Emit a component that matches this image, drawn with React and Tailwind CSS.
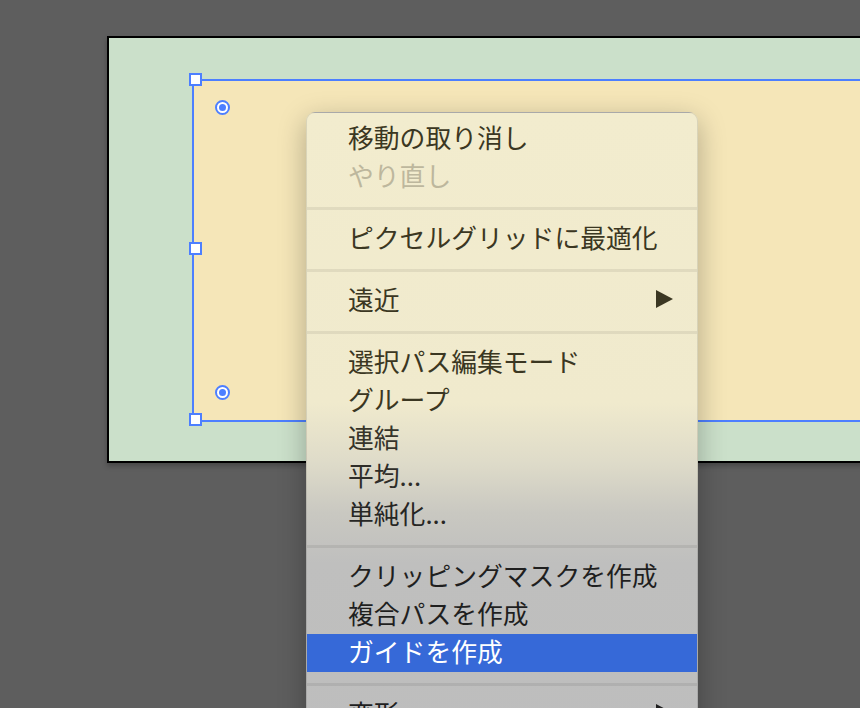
import React from 'react'

const items = [
  { label: '移動の取り消し', tone: 'text-[#3b3722]' },
  { label: 'やり直し', tone: 'text-[#bdb79d]' },
  { sep: true },
  { label: 'ピクセルグリッドに最適化', tone: 'text-[#3b3722]' },
  { sep: true },
  { label: '遠近', tone: 'text-[#3b3722]', sub: true },
  { sep: true },
  { label: '選択パス編集モード', tone: 'text-[#3b3722]' },
  { label: 'グループ', tone: 'text-[#3b3722]' },
  { label: '連結', tone: 'text-[#36342a]' },
  { label: '平均...', tone: 'text-[#2e2d28]' },
  { label: '単純化...', tone: 'text-[#262624]' },
  { sep: true },
  { label: 'クリッピングマスクを作成', tone: 'text-[#1f1f1f]' },
  { label: '複合パスを作成', tone: 'text-[#1f1f1f]' },
  { label: 'ガイドを作成', tone: 'text-white', active: true },
  { sep: true },
  { label: '変形', tone: 'text-[#1f1f1f]', sub: true },
  { label: '重ね順', tone: 'text-[#1f1f1f]', sub: true },
]

function Handle({ className }) {
  return <div className={`absolute w-[13px] h-[13px] bg-white border-2 border-[#4d7fff] ${className}`} />
}

function Pivot({ className }) {
  return (
    <div className={`absolute w-[15px] h-[15px] rounded-full bg-white border-2 border-[#4d7fff] flex items-center justify-center ${className}`}>
      <div className="w-[7px] h-[7px] rounded-full bg-[#4d7fff]" />
    </div>
  )
}

function Arrow({ color }) {
  return (
    <svg width="18" height="18" viewBox="0 0 18 18">
      <polygon points="1,0 18,9 1,18" fill={color} />
    </svg>
  )
}

export default function App() {
  return (
    <div className="relative w-[860px] h-[708px] overflow-hidden bg-[#5e5e5e] pt-[36px] pl-[107px] font-['Noto_Sans_CJK_JP',sans-serif]">
      {/* Artboard */}
      <div className="w-[800px] h-[427px] border-2 border-black bg-[#cbe0ca] pt-[41px] pl-[83px] shadow-[0_3px_5px_rgba(0,0,0,0.25)]">
        {/* Selected rectangle */}
        <div className="relative w-[700px] h-[343px] border-[2.5px] border-[#4d7fff] bg-[#f5e6b8]">
          <Handle className="left-[-5.5px] top-[-8.5px]" />
          <Handle className="left-[-5.5px] top-[160.5px]" />
          <Handle className="left-[-5.5px] top-[331.5px]" />
          <Pivot className="left-[20.5px] top-[18.5px]" />
          <Pivot className="left-[20.5px] top-[303.5px]" />
        </div>
      </div>

      {/* Context menu */}
      <div className="absolute left-[306px] top-[112px] w-[392px] rounded-[9px] pt-[7px] pb-[6px] border border-black/10 shadow-[0_8px_28px_rgba(0,0,0,0.28)] bg-[linear-gradient(180deg,#f2ecce_0px,#f0eacd_290px,#dedbc9_350px,#c9c8c1_400px,#bfbfbe_450px,#bdbdbd_100%)]">
        {items.map((item, i) =>
          item.sep ? (
            <div key={i} className="pt-[11px] pb-[10px]">
              <div className="h-[3px] bg-black/[0.07]" />
            </div>
          ) : (
            <div
              key={i}
              className={`h-[38px] flex items-center justify-between pl-[41px] pr-[24px] pb-[5px] text-[25.8px] leading-[33px] ${item.tone} ${item.active ? 'bg-[#3669d8]' : ''}`}
            >
              <span>{item.label}</span>
              {item.sub && <Arrow color={item.active ? '#fff' : i < 8 ? '#3b3722' : '#1f1f1f'} />}
            </div>
          )
        )}
      </div>
    </div>
  )
}
